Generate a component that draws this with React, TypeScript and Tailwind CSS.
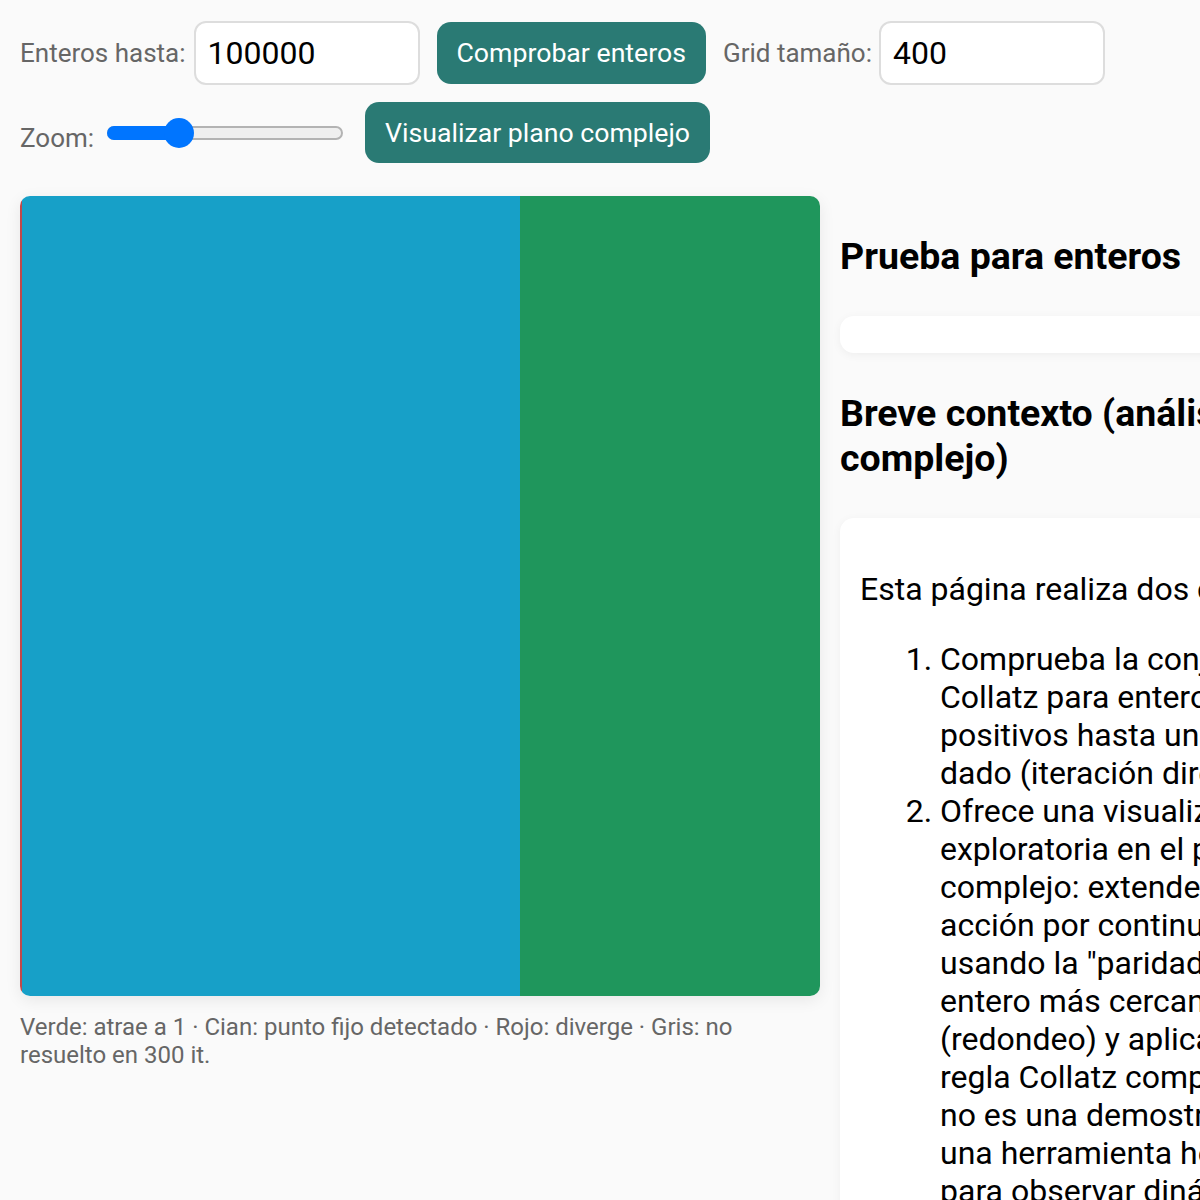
import { useState } from "react";

// Fixed preview of the escape-time plot: cyan band, green band, thin red strip on the left edge
const Plane = () => (
  <div className="relative h-[800px] w-[800px] overflow-hidden rounded-[10px] shadow-[0_4px_16px_rgba(0,0,0,0.08)]">
    <div className="flex h-full w-full">
      <div className="w-[2px] bg-[#c0494b]" />
      <div className="w-[498px] bg-[#17a0c8]" />
      <div className="flex-1 bg-[#1f965c]" />
    </div>
  </div>
);

const ZoomSlider = ({ value }: { value: number }) => (
  <div className="relative h-[30px] w-[236px]">
    <div className="absolute left-0 right-0 top-[8px] h-[14px] rounded-full border-2 border-[#b3b3b3] bg-[#efefef]" />
    <div
      className="absolute left-0 top-[8px] h-[14px] rounded-full bg-[#0075ff]"
      style={{ width: `${value * 236}px` }}
    />
    <div
      className="absolute top-0 h-[30px] w-[30px] rounded-full bg-[#0075ff]"
      style={{ left: `${value * 236 - 15}px` }}
    />
  </div>
);

export default function App() {
  const [maxN, setMaxN] = useState("100000");
  const [grid, setGrid] = useState("400");

  return (
    <div className="min-h-[1200px] w-full overflow-hidden bg-[#fafafa] p-5 pt-[21px] font-['Roboto',sans-serif] text-[#111]">
      <div className="flex items-center">
        <label className="flex items-center gap-2 text-[26px] text-[#666]">
          Enteros hasta:
          <input
            value={maxN}
            onChange={(e) => setMaxN(e.target.value)}
            className="h-[64px] w-[226px] rounded-[12px] border-2 border-[#dddddd] bg-white px-3 text-[32px] text-black outline-none"
          />
        </label>
        <button className="ml-[17px] h-[62px] rounded-[14px] bg-[#2a7a74] px-5 text-[26.67px] text-white">
          Comprobar enteros
        </button>
        <label className="ml-[17px] flex items-center gap-[7px] text-[26px] text-[#666]">
          Grid tamaño:
          <input
            value={grid}
            onChange={(e) => setGrid(e.target.value)}
            className="h-[64px] w-[226px] rounded-[12px] border-2 border-[#dddddd] bg-white px-3 text-[32px] text-black outline-none"
          />
        </label>
      </div>

      <div className="mt-[17px] flex items-center">
        <span className="mt-[11px] text-[26px] text-[#666]">Zoom:</span>
        <div className="ml-[13px]">
          <ZoomSlider value={0.305} />
        </div>
        <button className="ml-[22px] h-[61px] rounded-[14px] bg-[#2a7a74] px-5 text-[26.67px] text-white">
          Visualizar plano complejo
        </button>
      </div>

      <div className="mt-[33px] flex items-start gap-5">
        <div className="w-[800px] shrink-0">
          <Plane />
          <p className="mt-[17px] text-[24px] leading-[28px] text-[#666]">
            Verde: atrae a 1 · Cian: punto fijo detectado · Rojo: diverge · Gris: no resuelto en 300 it.
          </p>
        </div>

        <div className="w-[530px] shrink-0">
          <h3 className="my-[37.5px] text-[37.5px] font-bold leading-[45px] text-black">Prueba para enteros</h3>
          <div className="h-[37px] rounded-[14px] bg-white shadow-[0_2px_10px_rgba(0,0,0,0.05)]" />
          <h3 className="my-[37.5px] text-[37.5px] font-bold leading-[45px] text-black">
            Breve contexto (análisis complejo)
          </h3>
          <div className="rounded-[14px] bg-white px-5 pb-5 pt-5 text-[32px] leading-[38px] text-black shadow-[0_2px_10px_rgba(0,0,0,0.05)]">
            <p className="my-8">Esta página realiza dos cosas:</p>
            <ol className="my-8 list-decimal pl-20">
              <li>
                Comprueba la conjetura de Collatz para enteros positivos hasta un límite dado (iteración directa).
              </li>
              <li>
                Ofrece una visualización exploratoria en el plano complejo: extendemos la acción por continuidad
                usando la "paridad" del entero más cercano (redondeo) y aplicamos la regla Collatz compleja. Esto no
                es una demostración; es una herramienta heurística para observar dinámicas.
              </li>
            </ol>
          </div>
        </div>
      </div>
    </div>
  );
}
